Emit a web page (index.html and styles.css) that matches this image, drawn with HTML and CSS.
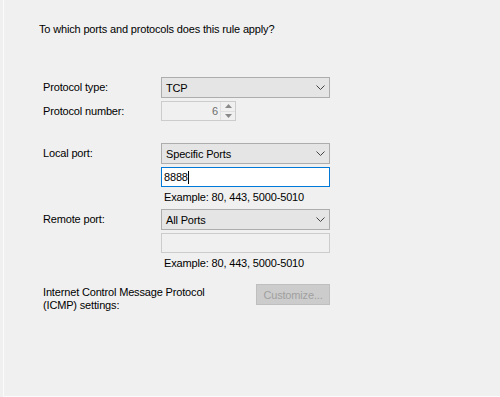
FILE: index.html
```html
<!DOCTYPE html>
<html>
<head>
    <meta name="viewport" content="width=device-width, initial-scale=1.0">
    <title>Protocol and Ports</title>
    <link rel="stylesheet" href="styles.css">
</head>
<body>
    <div class="page">
        <p class="title">To which ports and protocols does this rule apply?</p>
        <div class="form">
            <div class="row row-type">
                <label>Protocol type:</label>
                <div class="select">
                    <span>TCP</span>
                    <svg class="chev" width="9" height="5" viewBox="0 0 9 5"><path d="M0.5 0.5 L4.5 4.5 L8.5 0.5" fill="none" stroke="#444" stroke-width="1"/></svg>
                </div>
            </div>
            <div class="row row-num">
                <label>Protocol number:</label>
                <div class="spin">
                    <span class="val">6</span>
                    <div class="arrows">
                        <div class="arrow"><svg width="7" height="4" viewBox="0 0 7 4"><path d="M0 4 L3.5 0 L7 4 Z" fill="#8a8a8a"/></svg></div>
                        <div class="arrow"><svg width="7" height="4" viewBox="0 0 7 4"><path d="M0 0 L3.5 4 L7 0 Z" fill="#8a8a8a"/></svg></div>
                    </div>
                </div>
            </div>
            <div class="row row-local">
                <label>Local port:</label>
                <div class="select">
                    <span>Specific Ports</span>
                    <svg class="chev" width="9" height="5" viewBox="0 0 9 5"><path d="M0.5 0.5 L4.5 4.5 L8.5 0.5" fill="none" stroke="#444" stroke-width="1"/></svg>
                </div>
            </div>
            <div class="row row-input">
                <label></label>
                <div class="input focus"><span>8888</span><span class="caret"></span></div>
            </div>
            <div class="hint">Example: 80, 443, 5000-5010</div>
            <div class="row row-remote">
                <label>Remote port:</label>
                <div class="select">
                    <span>All Ports</span>
                    <svg class="chev" width="9" height="5" viewBox="0 0 9 5"><path d="M0.5 0.5 L4.5 4.5 L8.5 0.5" fill="none" stroke="#444" stroke-width="1"/></svg>
                </div>
            </div>
            <div class="row row-input">
                <label></label>
                <div class="input disabled"></div>
            </div>
            <div class="hint">Example: 80, 443, 5000-5010</div>
            <div class="row row-icmp">
                <label>Internet Control Message Protocol<br>(ICMP) settings:</label>
                <button class="btn" disabled>Customize...</button>
            </div>
        </div>
    </div>
</body>
</html>
```

FILE: styles.css
```css
body {
    margin: 0;
    background: #f0f0f0;
    font-family: 'Liberation Sans', Arial, sans-serif;
    font-size: 11px;
    letter-spacing: -0.16px;
    color: #000;
}
.page {
    margin-left: 3px;
    height: 396px;
    border-left: 1px solid #fbfbfb;
    border-bottom: 1px solid #fbfbfb;
    background: #f0f0f0;
    overflow: hidden;
}
.title {
    margin: 22px 0 0 35px;
    line-height: 15px;
}
.form {
    margin-left: 39px;
    padding-top: 40px;
}
.row {
    display: flex;
    align-items: center;
}
.row label {
    width: 118px;
    flex: none;
    line-height: 13px;
}
.row-num { margin-top: 3px; }
.row-local { margin-top: 22px; }
.row-input { margin-top: 3px; }
.row-remote { margin-top: 4px; }
.row-icmp {
    margin-top: 13px;
    align-items: flex-start;
}
.row-icmp label {
    width: 213px;
    white-space: nowrap;
    padding-top: 2px;
}
.select {
    width: 169px;
    height: 21px;
    box-sizing: border-box;
    background: #e5e5e5;
    border: 1px solid #adadad;
    display: flex;
    align-items: center;
    justify-content: space-between;
    padding: 0 4px 0 4px;
}
.chev {
    display: block;
}
.spin {
    width: 75px;
    height: 20px;
    box-sizing: border-box;
    border: 1px solid #cccccc;
    background: #f0f0f0;
    display: flex;
    align-items: stretch;
}
.spin .val {
    flex: 1;
    text-align: right;
    color: #6d6d6d;
    line-height: 18px;
    padding-right: 2px;
}
.arrows {
    width: 14px;
    display: flex;
    flex-direction: column;
    border-left: 1px solid #e0e0e0;
}
.arrow {
    flex: 1;
    display: flex;
    align-items: center;
    justify-content: center;
}
.arrow + .arrow {
    border-top: 1px solid #e0e0e0;
}
.arrow svg {
    display: block;
}
.input {
    width: 169px;
    height: 20px;
    box-sizing: border-box;
    display: flex;
    align-items: center;
    padding-left: 2px;
}
.input.focus {
    background: #fff;
    border: 1px solid #0078d7;
}
.input.disabled {
    background: #f0f0f0;
    border: 1px solid #cccccc;
}
.caret {
    width: 1px;
    height: 13px;
    background: #000;
}
.hint {
    margin-left: 121px;
    line-height: 15px;
    height: 15px;
    margin-top: 3px;
}
.btn {
    width: 74px;
    height: 21px;
    box-sizing: border-box;
    background: #cccccc;
    border: 1px solid #bfbfbf;
    color: #a0a0a0;
    font-family: 'Liberation Sans', Arial, sans-serif;
    font-size: 11px;
    letter-spacing: -0.16px;
    padding: 0;
}
```
